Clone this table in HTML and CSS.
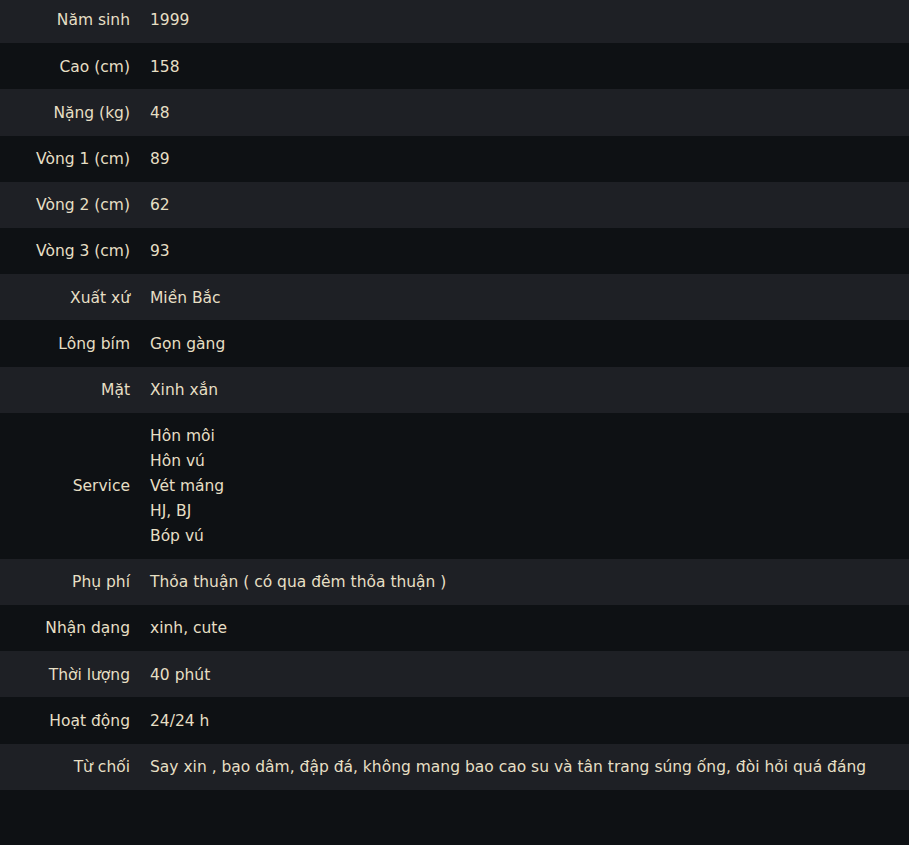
FILE: index.html
```html
<!DOCTYPE html>
<html lang="vi">
<head>
  <meta charset="UTF-8">
  <title>Thông tin</title>
  <link rel="stylesheet" href="styles.css">
</head>
<body>
  <table class="info">
    <tr><th>Năm sinh</th><td>1999</td></tr>
    <tr><th>Cao (cm)</th><td>158</td></tr>
    <tr><th>Nặng (kg)</th><td>48</td></tr>
    <tr><th>Vòng 1 (cm)</th><td>89</td></tr>
    <tr><th>Vòng 2 (cm)</th><td>62</td></tr>
    <tr><th>Vòng 3 (cm)</th><td>93</td></tr>
    <tr><th>Xuất xứ</th><td>Miền Bắc</td></tr>
    <tr><th>Lông bím</th><td>Gọn gàng</td></tr>
    <tr><th>Mặt</th><td>Xinh xắn</td></tr>
    <tr><th>Service</th><td>Hôn môi<br>Hôn vú<br>Vét máng<br>HJ, BJ<br>Bóp vú</td></tr>
    <tr><th>Phụ phí</th><td>Thỏa thuận ( có qua đêm thỏa thuận )</td></tr>
    <tr><th>Nhận dạng</th><td>xinh, cute</td></tr>
    <tr><th>Thời lượng</th><td>40 phút</td></tr>
    <tr><th>Hoạt động</th><td>24/24 h</td></tr>
    <tr><th>Từ chối</th><td>Say xin , bạo dâm, đập đá, không mang bao cao su và tân trang súng ống, đòi hỏi quá đáng</td></tr>
  </table>
</body>
</html>
```

FILE: styles.css
```css
body {
  margin: 0;
  background: #0e1114;
  color: #e6dfc4;
  font-family: "DejaVu Sans", Verdana, sans-serif;
  font-size: 15.5px;
}
.info {
  width: 100%;
  border-collapse: collapse;
  margin-top: -3px;
}
.info tr:nth-child(odd) {
  background: #1e2025;
}
.info th,
.info td {
  padding: 11.4px 0 9.8px;
  line-height: 25px;
  font-weight: normal;
  vertical-align: middle;
}
.info th {
  width: 130px;
  text-align: right;
  padding-right: 20px;
  white-space: nowrap;
}
.info td {
  text-align: left;
}
```
